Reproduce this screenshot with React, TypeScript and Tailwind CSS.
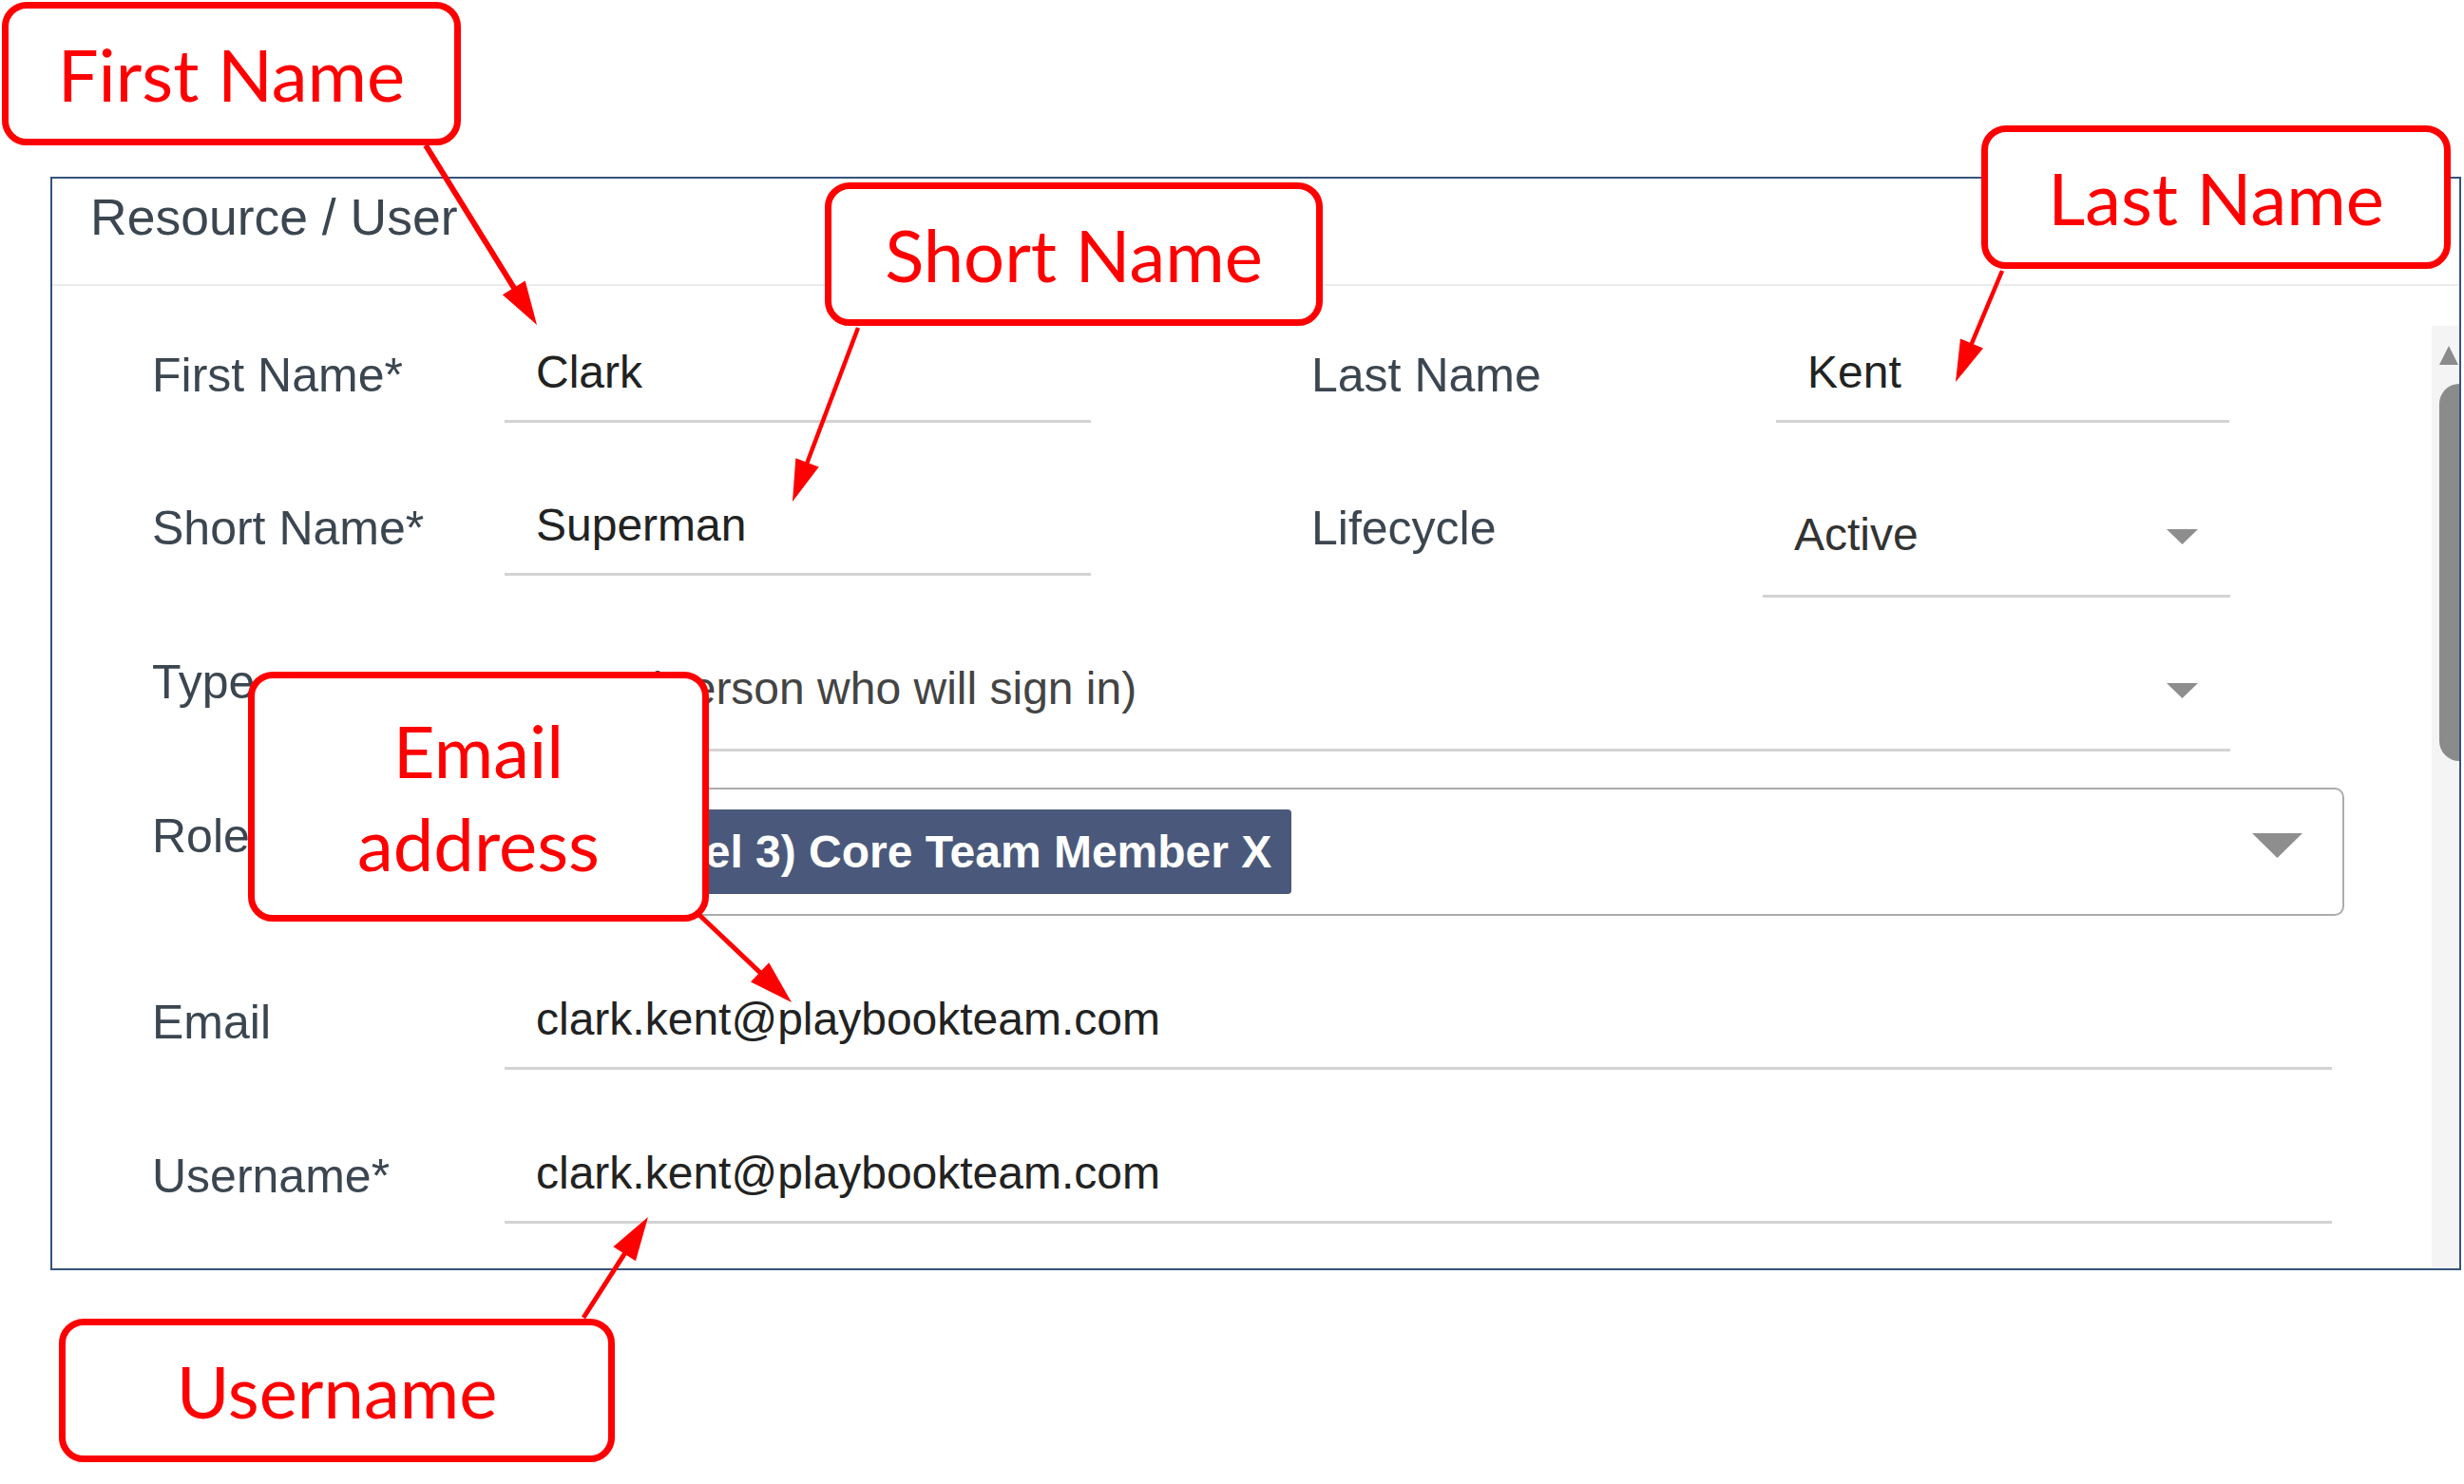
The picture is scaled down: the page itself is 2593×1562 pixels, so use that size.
import React from "react";

type Pt = [number, number];

const ARROWS: { from: Pt; to: Pt; w: number; len: number; half: number }[] = [
  { from: [448, 153], to: [565, 342], w: 6, len: 46, half: 14 },
  { from: [903, 345], to: [834, 528], w: 4.5, len: 44, half: 13 },
  { from: [2107, 285], to: [2058, 402], w: 4.5, len: 44, half: 13 },
  { from: [720, 948], to: [833, 1055], w: 5, len: 46, half: 14 },
  { from: [614, 1387], to: [682, 1281], w: 5, len: 46, half: 14 },
];

function Arrow({ from, to, w, len, half }: (typeof ARROWS)[number]) {
  const dx = to[0] - from[0];
  const dy = to[1] - from[1];
  const d = Math.hypot(dx, dy);
  const ux = dx / d;
  const uy = dy / d;
  const bx = to[0] - ux * len;
  const by = to[1] - uy * len;
  const pts = `${to[0]},${to[1]} ${bx - uy * half},${by + ux * half} ${bx + uy * half},${by - ux * half}`;
  return (
    <g>
      <line x1={from[0]} y1={from[1]} x2={bx + ux * 4} y2={by + uy * 4} stroke="#ff0000" strokeWidth={w} />
      <polygon points={pts} fill="#ff0000" />
    </g>
  );
}

function Caret({ big }: { big?: boolean }) {
  return big ? (
    <svg width="53" height="26" viewBox="0 0 53 26" className="mt-[46px] shrink-0">
      <polygon points="0,0 53,0 26.5,26" fill="#8e8e8e" />
    </svg>
  ) : (
    <svg width="33" height="16" viewBox="0 0 33 16" className="mt-[31px] shrink-0">
      <polygon points="0,0 33,0 16.5,16" fill="#8e8e8e" />
    </svg>
  );
}

function Label({ text, className = "" }: { text: string; className?: string }) {
  return <div className={`text-[50px] leading-none text-[#3b4650] ${className}`}>{text}</div>;
}

function TextField({ value, width }: { value: string; width: string }) {
  return (
    <div className={`${width} h-[80px] shrink-0 border-b-[3px] border-[#d3d3d3] pl-[33px] pt-[3px] text-[48px] leading-none text-[#222]`}>
      {value}
    </div>
  );
}

function SelectField({ value, width, tone }: { value: string; width: string; tone: string }) {
  return (
    <div className={`${width} h-[103px] shrink-0 border-b-[3px] border-[#d3d3d3] pl-[33px] pr-[34px] flex items-start justify-between`}>
      <span className={`mt-[13px] text-[48px] leading-none whitespace-nowrap ${tone}`}>{value}</span>
      <Caret />
    </div>
  );
}

function Callout({ className, lead = "leading-none", children }: { className: string; lead?: string; children: React.ReactNode }) {
  return (
    <div
      className={`absolute flex items-center justify-center rounded-[26px] border-[7px] border-[#ff0000] bg-white text-center font-['Lato',sans-serif] text-[76px] text-[#ff0000] ${lead} ${className}`}
    >
      {children}
    </div>
  );
}

export default function App() {
  return (
    <div className="relative h-[1562px] w-[2593px] overflow-hidden bg-white pl-[53px] pt-[186px] font-['Liberation_Sans',Arial,sans-serif]">
      <div className="flex h-[1151px] w-[2537px] flex-col border-2 border-[#34537a]">
        <div className="h-[113px] shrink-0 border-b-2 border-[#ececec] pl-[40px] pt-[14px] text-[53.5px] leading-none text-[#3b4650]">
          Resource / User
        </div>

        <div className="flex min-h-0 flex-1 pt-[42px]">
          <div className="flex-1 pl-[105px] pt-[22px]">
            <div className="flex items-start">
              <Label text="First Name*" className="w-[371px] shrink-0 pt-[5px]" />
              <TextField value="Clark" width="w-[617px]" />
              <Label text="Last Name" className="ml-[232px] w-[489px] shrink-0 pt-[5px]" />
              <TextField value="Kent" width="w-[477px]" />
            </div>

            <div className="mt-[81px] flex items-start">
              <Label text="Short Name*" className="w-[371px] shrink-0 pt-[5px]" />
              <TextField value="Superman" width="w-[617px]" />
              <Label text="Lifecycle" className="ml-[232px] w-[475px] shrink-0 pt-[5px]" />
              <SelectField value="Active" width="w-[492px]" tone="text-[#333]" />
            </div>

            <div className="mt-[59px] flex items-start">
              <Label text="Type" className="w-[371px] shrink-0 pt-[5px]" />
              <SelectField value="User (Person who will sign in)" width="w-[1816px]" tone="text-[#444]" />
            </div>

            <div className="mt-[38px] flex items-start">
              <Label text="Role" className="w-[371px] shrink-0 pt-[26px]" />
              <div className="flex h-[135px] w-[1936px] shrink-0 items-start justify-between rounded-[10px] border-2 border-[#ababab] pr-[42px]">
                <div className="ml-[90px] mt-[21px] flex h-[89px] items-center rounded-[4px] bg-[#4a597b] pl-[20px] pr-[21px] text-[48px] font-bold leading-none whitespace-nowrap text-white">
                  (Level 3) Core Team Member X
                </div>
                <Caret big />
              </div>
            </div>

            <div className="mt-[82px] flex items-start">
              <Label text="Email" className="w-[371px] shrink-0 pt-[5px]" />
              <TextField value="clark.kent@playbookteam.com" width="w-[1923px]" />
            </div>

            <div className="mt-[82px] flex items-start">
              <Label text="Username*" className="w-[371px] shrink-0 pt-[5px]" />
              <TextField value="clark.kent@playbookteam.com" width="w-[1923px]" />
            </div>
          </div>

          {/* scrollbar */}
          <div className="flex w-[29px] shrink-0 flex-col items-end bg-[#f4f4f4]">
            <svg width="20" height="22" viewBox="0 0 20 22" className="mr-[1px] mt-[19px]">
              <polygon points="10,2 20,22 0,22" fill="#8b8b8b" />
            </svg>
            <div className="mt-[20px] h-[397px] w-[21px] rounded-l-full bg-[#8b8b8b]" />
          </div>
        </div>
      </div>

      <svg className="pointer-events-none absolute left-0 top-0" width="2593" height="1562">
        {ARROWS.map((a, i) => (
          <Arrow key={i} {...a} />
        ))}
      </svg>

      <Callout className="left-[2px] top-[2px] h-[151px] w-[483px]">First Name</Callout>
      <Callout className="left-[868px] top-[192px] h-[151px] w-[524px]">Short Name</Callout>
      <Callout className="left-[2085px] top-[132px] h-[151px] w-[494px]">Last Name</Callout>
      <Callout className="left-[261px] top-[707px] h-[263px] w-[485px]" lead="leading-[98px]">
        Email
        <br />
        address
      </Callout>
      <Callout className="left-[62px] top-[1388px] h-[151px] w-[585px]">Username</Callout>
    </div>
  );
}
